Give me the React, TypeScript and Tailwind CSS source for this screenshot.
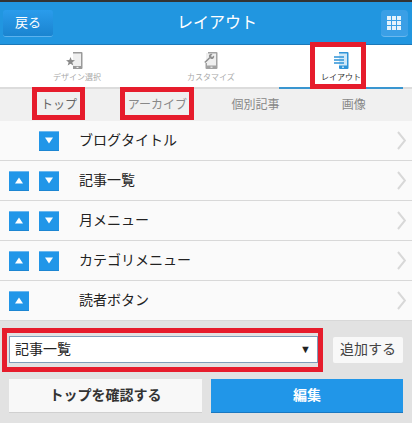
const FONT = "[font-family:'Liberation_Sans','Noto_Sans_CJK_JP',sans-serif]";

const ROWS = [
  { label: "ブログタイトル", up: false, down: true },
  { label: "記事一覧", up: true, down: true },
  { label: "月メニュー", up: true, down: true },
  { label: "カテゴリメニュー", up: true, down: true },
  { label: "読者ボタン", up: true, down: false },
];

const SUB_TABS = ["トップ", "アーカイブ", "個別記事", "画像"];

function Arrow({ dir }: { dir: "up" | "down" }) {
  return (
    <div className="flex h-5 w-5 items-center justify-center border-t border-b border-t-[#6db8ee] border-b-[#1c86d2] bg-[#2196e8]">
      <svg width="8" height="7" viewBox="0 0 8 7">
        <path d={dir === "up" ? "M4 0.5 L8 6.5 L0 6.5 Z" : "M0 0.5 L8 0.5 L4 6.5 Z"} fill="#fff" />
      </svg>
    </div>
  );
}

function Row({ label, up, down }: { label: string; up: boolean; down: boolean }) {
  return (
    <div className="flex h-10 items-center border-b border-[#d8d8d8] bg-[#fafafa] pl-[9px] pr-[6px]">
      <div className="flex w-[50px] gap-[10px]">
        <div className="w-5">{up && <Arrow dir="up" />}</div>
        <div className="w-5">{down && <Arrow dir="down" />}</div>
      </div>
      <span className="ml-[20px] flex-1 text-[14px] text-[#222]">{label}</span>
      <svg width="9" height="19" viewBox="0 0 9 19">
        <path d="M1 1 L8 9.5 L1 18" fill="none" stroke="#d8d8d8" strokeWidth="2" />
      </svg>
    </div>
  );
}

function StarIcon() {
  return (
    <svg width="17" height="18" viewBox="0 0 17 18">
      <rect x="7" y="2" width="9" height="14" fill="#efefef" />
      <path d="M7 1 H15.5 A1 1 0 0 1 16.5 2 V17 A1 1 0 0 1 15.5 18 H7 V15 H15 V2.5 H7 Z" fill="#9a9a9a" />
      <rect x="7" y="15" width="9" height="3" fill="#9a9a9a" />
      <rect x="10.5" y="15.8" width="2" height="1.2" fill="#eee" />
      <path d="M4.5 6 L5.7 9 L9 9.2 L6.4 11.3 L7.3 14.5 L4.5 12.7 L1.7 14.5 L2.6 11.3 L0 9.2 L3.3 9 Z" fill="#8a8a8a" />
    </svg>
  );
}

function WrenchIcon() {
  return (
    <svg width="14" height="18" viewBox="0 0 14 18">
      <rect x="2" y="2" width="11" height="14" fill="#efefef" />
      <path d="M4 1 H12.5 A1 1 0 0 1 13.5 2 V17 A1 1 0 0 1 12.5 18 H2.5 A1 1 0 0 1 1.5 17 V12 H3 V14.5 H12 V2.5 H4 Z" fill="#a2a2a2" />
      <rect x="6.5" y="15.6" width="2" height="1.2" fill="#eee" />
      <path d="M0.8 11.5 L6 6.5" stroke="#8f8f8f" strokeWidth="1.6" fill="none" />
      <path d="M5 6 A2.5 2.5 0 0 1 8.5 3 L7 5 L8 6 L10 4.6 A2.5 2.5 0 0 1 7 8 Z" fill="#8f8f8f" />
    </svg>
  );
}

function LayoutIcon() {
  return (
    <svg width="15" height="18" viewBox="0 0 15 18">
      <rect x="5" y="2" width="9" height="13" fill="#cfe8f8" />
      <path d="M5 1 H13.5 A1 1 0 0 1 14.5 2 V17 A1 1 0 0 1 13.5 18 H6 A1 1 0 0 1 5 17 V14.5 H13 V2.5 H5 Z" fill="#2f94d8" />
      <rect x="8" y="15.6" width="2" height="1.2" fill="#d8eefb" />
      <path d="M0 6 H10 M0 9 H10 M0 12 H10" stroke="#2f94d8" strokeWidth="1.7" fill="none" />
    </svg>
  );
}

function RedFrame({ className }: { className: string }) {
  return <div className={`pointer-events-none absolute border-[5px] border-[#e61c2c] ${className}`} />;
}

export default function App() {
  return (
    <div className={`relative h-[423px] w-[412px] overflow-hidden bg-[#e2e2e2] ${FONT}`}>
      <div className="h-[2px] bg-[#333]" />
      <header className="relative flex h-[43px] items-center justify-between border-b border-[#1b78b8] bg-[#2196e0] pl-[3px] pr-[4px]">
        <button className="h-[27px] w-[50px] rounded-[3px] border-b border-[#5cb2ee] bg-gradient-to-b from-[#2a9cec] to-[#1a84d0] text-[13px] text-white">戻る</button>
        <h1 className="text-[16px] text-white">レイアウト</h1>
        <div className="flex h-[27px] w-[27px] items-center justify-center rounded-[4px] border-b border-[#6bb8ee] bg-[#3a9fe6]">
          <div className="grid grid-cols-3 gap-px">
            {Array.from({ length: 9 }).map((_, i) => (
              <div key={i} className="h-[4px] w-[4px] bg-[#e4f2fc]" />
            ))}
          </div>
        </div>
      </header>
      <nav className="flex h-[44px] border-b-2 border-[#dcdcdc] bg-white">
        <div className="flex w-[154px] flex-col items-center pt-[6px]">
          <div className="mr-[6px]"><StarIcon /></div>
          <span className="mt-[3px] text-[8px] leading-[12px] text-[#aaa]">デザイン選択</span>
        </div>
        <div className="flex w-[125px] flex-col items-center pr-[11px] pt-[6px]">
          <WrenchIcon />
          <span className="mt-[3px] text-[8px] leading-[12px] text-[#aaa]">カスタマイズ</span>
        </div>
        <div className="-mb-[2px] flex w-[124px] flex-col items-center border-b-2 border-[#3a96d0] pt-[6px]">
          <LayoutIcon />
          <span className="mt-[3px] text-[8px] leading-[12px] text-[#333]">レイアウト</span>
        </div>
      </nav>
      <div className="grid h-[32px] grid-cols-4 items-center bg-[#f0f0f0] pl-[10px] pr-[9px] text-center text-[12px] text-[#888]">
        {SUB_TABS.map((t, i) => (
          <div key={t} className={i === 0 ? "text-[#666]" : ""}>{t}</div>
        ))}
      </div>
      {ROWS.map((r) => (
        <Row key={r.label} {...r} />
      ))}
      <div className="flex items-center gap-[15px] pl-[9px] pr-[9px] pt-[15px]">
        <div className="flex h-[27px] w-[309px] items-center justify-between border border-[#7f9db9] bg-white pl-[5px] pr-[6px] text-[14px] text-[#222]">
          <span>記事一覧</span>
          <span className="text-[11px]">▼</span>
        </div>
        <button className="h-[26px] flex-1 rounded-[2px] bg-[#f8f8f8] text-[14px] text-[#444]">追加する</button>
      </div>
      <div className="flex gap-[9px] pl-[9px] pr-[9px] pt-[16px]">
        <button className="h-[34px] w-[193px] border-b border-[#d0d0d0] bg-[#f8f8f8] text-[14px] font-bold text-[#333]">トップを確認する</button>
        <button className="h-[34px] flex-1 border-b border-[#1a78c0] bg-[#2196e8] text-[14px] font-bold text-white">編集</button>
      </div>
      <RedFrame className="left-[32px] top-[87px] h-[33px] w-[53px]" />
      <RedFrame className="left-[120px] top-[87px] h-[33px] w-[74px]" />
      <RedFrame className="left-[310px] top-[42px] h-[47px] w-[56px]" />
      <RedFrame className="left-[2px] top-[328px] h-[44px] w-[321px]" />
    </div>
  );
}
